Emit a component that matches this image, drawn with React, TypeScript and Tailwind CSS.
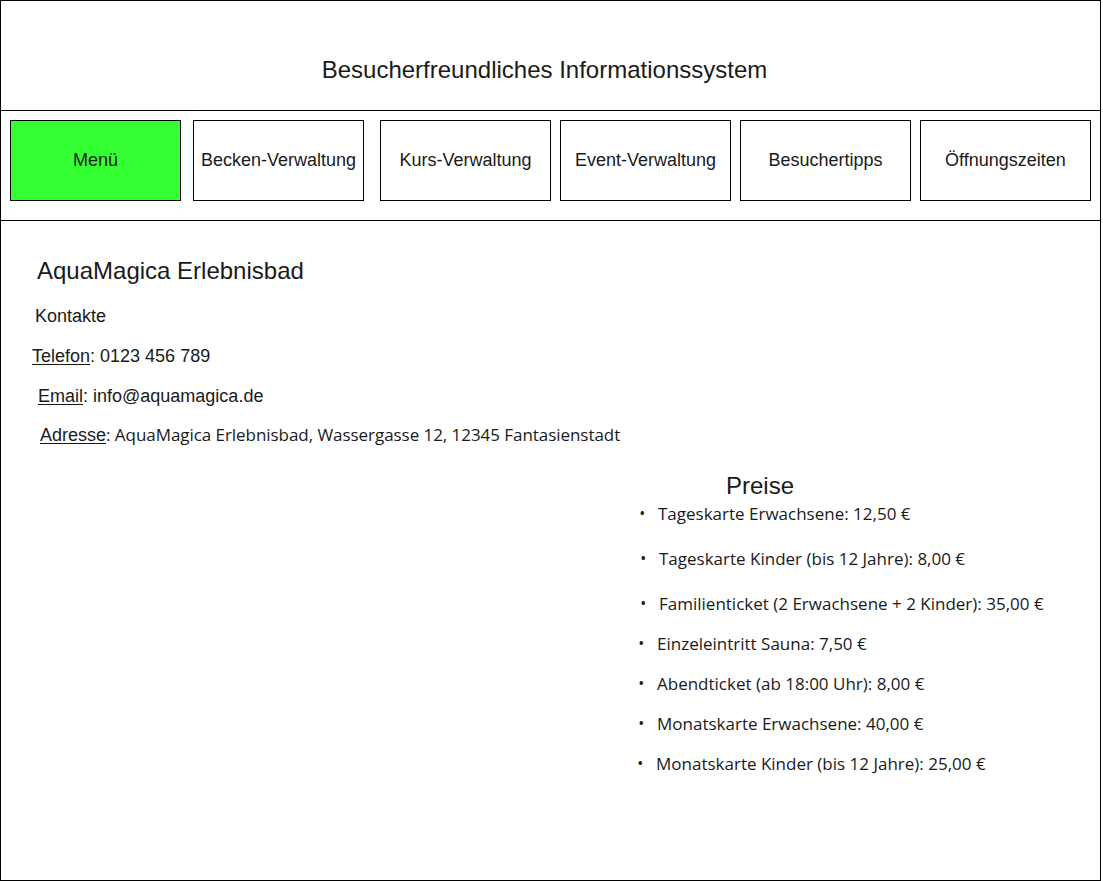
import React from 'react';

const navItems = [
  { label: 'Menü', ml: 'ml-[9px]', active: true },
  { label: 'Becken-Verwaltung', ml: 'ml-[12px]' },
  { label: 'Kurs-Verwaltung', ml: 'ml-[16px]' },
  { label: 'Event-Verwaltung', ml: 'ml-[9px]' },
  { label: 'Besuchertipps', ml: 'ml-[9px]' },
  { label: 'Öffnungszeiten', ml: 'ml-[9px]' },
];

const prices = [
  { text: 'Tageskarte Erwachsene: 12,50 €', cls: 'h-[45px] pl-[1px]' },
  { text: 'Tageskarte Kinder (bis 12 Jahre): 8,00 €', cls: 'h-[45px] pl-[2px]' },
  { text: 'Familienticket (2 Erwachsene + 2 Kinder): 35,00 €', cls: 'h-[40px] pl-[2px]' },
  { text: 'Einzeleintritt Sauna: 7,50 €', cls: 'h-[40px]' },
  { text: 'Abendticket (ab 18:00 Uhr): 8,00 €', cls: 'h-[40px]' },
  { text: 'Monatskarte Erwachsene: 40,00 €', cls: 'h-[40px]' },
  { text: 'Monatskarte Kinder (bis 12 Jahre): 25,00 €', cls: 'h-[40px] -ml-[1px]' },
];

const sans = "font-['Liberation_Sans',Arial,sans-serif]";
const ui = "font-['Open_Sans','Noto_Sans',sans-serif]";

export default function App() {
  return (
    <div className="w-[1101px] h-[881px] border border-black bg-white flex flex-col text-[#1a1a1a]">
      {/* Header */}
      <header className={`h-[110px] border-b border-black flex items-center justify-center pt-[28px] pr-[12px] text-[24px] ${sans}`}>
        Besucherfreundliches Informationssystem
      </header>

      {/* Navigation */}
      <nav className="h-[110px] border-b border-black flex items-start pt-[9px]">
        {navItems.map((item) => (
          <div
            key={item.label}
            className={`${item.ml} w-[171px] h-[81px] border border-black flex items-center justify-center text-[18px] ${sans} ${
              item.active ? 'bg-[#33ff33]' : 'bg-white'
            }`}
          >
            {item.label}
          </div>
        ))}
      </nav>

      {/* Content */}
      <main className="flex-1 flex flex-col">
        <h1 className={`pl-[36px] pt-[35px] text-[24px] leading-[30px] ${sans}`}>AquaMagica Erlebnisbad</h1>
        <p className={`pl-[34px] mt-[20px] text-[18px] leading-[20px] ${sans}`}>Kontakte</p>
        <p className={`pl-[31px] mt-[20px] text-[18px] leading-[20px] ${sans}`}>
          <span className="underline underline-offset-2">Telefon</span>: 0123 456 789
        </p>
        <p className={`pl-[37px] mt-[20px] text-[18px] leading-[20px] ${sans}`}>
          <span className="underline underline-offset-2">Email</span>: info@aquamagica.de
        </p>
        <p className="pl-[39px] mt-[18px] text-[18px] leading-[20px]">
          <span className={`underline underline-offset-2 ${sans}`}>Adresse</span>
          <span className={`text-[17px] tracking-[-0.05px] ${ui}`}>: AquaMagica Erlebnisbad, Wassergasse 12, 12345 Fantasienstadt</span>
        </p>

        <section className="ml-[636px] mt-[27px]">
          <h2 className={`pl-[89px] text-[24px] leading-[28px] ${sans}`}>Preise</h2>
          <ul className={`mt-[3px] text-[17px] ${ui}`}>
            {prices.map((p) => (
              <li key={p.text} className={`${p.cls} flex items-start`}>
                <span className="w-[20px] pl-[2px] leading-[22px] text-[12px] font-bold">•</span>
                <span className="leading-[22px]">{p.text}</span>
              </li>
            ))}
          </ul>
        </section>
      </main>
    </div>
  );
}
